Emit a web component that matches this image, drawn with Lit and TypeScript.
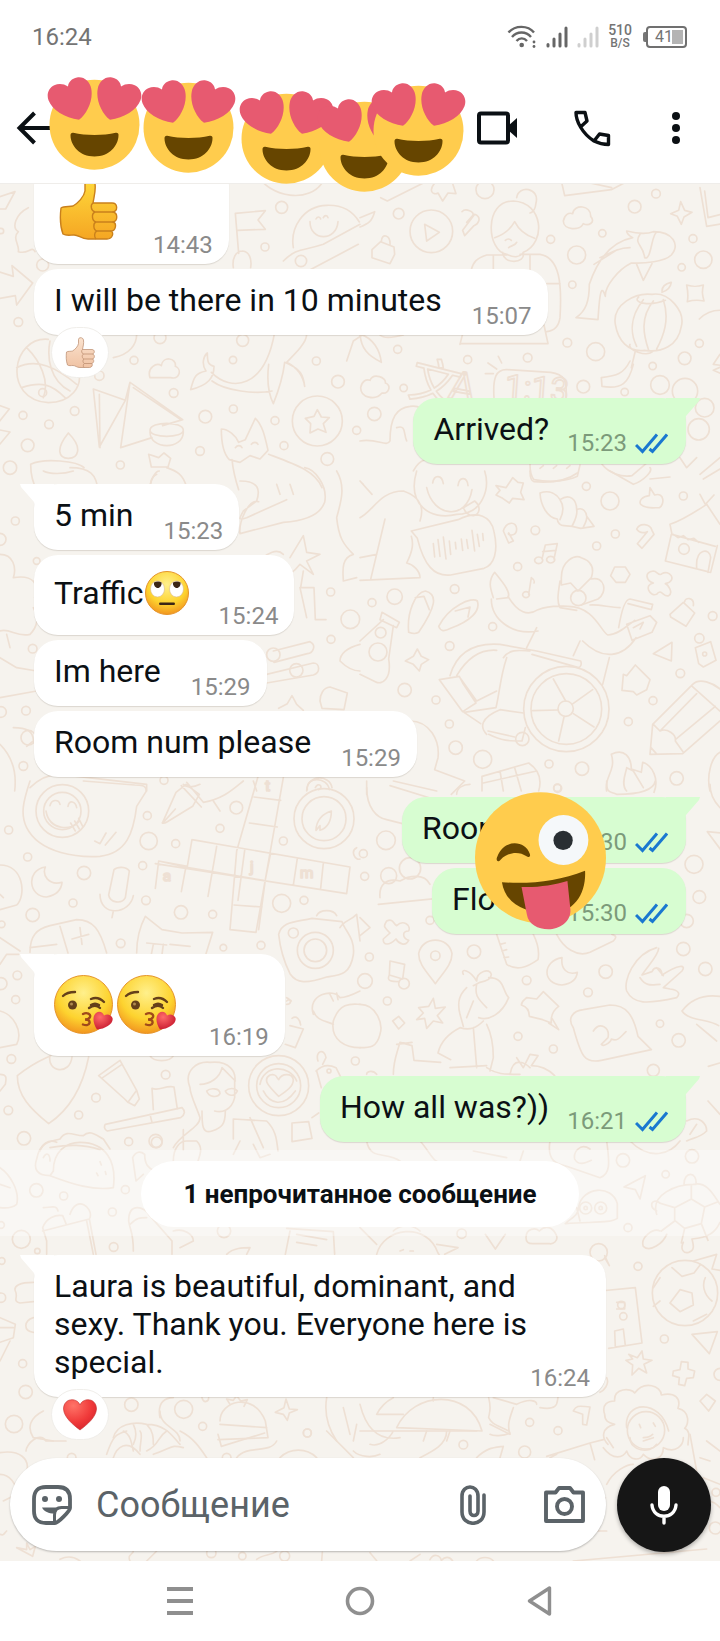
import { LitElement, html, svg, css, nothing, type TemplateResult } from "lit";
import { customElement, property } from "lit/decorators.js";
import { classMap } from "lit/directives/class-map.js";

/* ---------- Background doodles ---------- */

interface Doodles {
  x: number;
  y: number;
  dots: number[][];
  paths: string[];
  letters?: [number, number, number, number, string][];
}

// Every sheet is drawn at three times its size and placed at (x, y).
const sheets: Doodles[] = [
  {
    x: 0, y: 180,
    dots: [[845, 79, 18], [795, 198, 12], [128, 252, 18], [55, 423, 13], [3, 150, 8], [480, 470, 18], [728, 478, 18], [402, 538, 12], [298, 584, 14], [699, 537, 11], [949, 540, 12], [1014, 602, 19], [521, 636, 13], [224, 690, 13], [69, 703, 12], [147, 730, 13], [616, 707, 19], [700, 684, 12], [825, 719, 12], [1070, 748, 12], [852, 794, 12], [83, 793, 19], [600, 810, 13], [361, 852, 12], [982, 834, 19], [30, 860, 20], [952, 720, 75], [903, 240, 17], [128, 635, 12]],
    paths: [
      "M706 97l90-8-22 28 22 28-84 3M706 97l10 120M728 210c-22 0-32 24-28 50M728 210c20 2 28 24 24 50",
      "M880 200c-10-60 30-125 100-127 50-2 80 20 98 50M930 122c0 60 80 60 84 0M948 114c4-8 12-8 14 0M970 110c4-8 12-8 14 0M850 240c40-40 60-30 120-50l110-60M905 280l170-90",
      "M-10 50l55-18-28 52h-20M-10 270l50 16-4-32 62 52-48 66-4-28-56 10M85 80c-40 20-50 60-30 72-20 20 5 40 0 60 30 10 40-20 50 0",
      "M145 475c-110-10-140 180 0 190 70 0 100-50 92-88M50 560c60-30 120 0 180 50M80 500c40 40 70 100 50 150M150 480c-10 50 0 120 60 150M65 620c60-20 90-10 130 30",
      "M450 590c-10-30 20-46 34-36 4-30 46-24 42 2 20 8 14 40-14 34H450z",
      "M572 626c10-40 16-50 46-56-14-20-8-44 4-54 0 30 4 36 20 40 0 34-16 56-70 70zM634 574c60 60 160 50 190-120M636 600c40 30 130 40 180 30M806 550c-6 50 0 90 14 118 20-50 30-90 34-124 50 20 56 40 60 72-6-40-30-60-54-72 30-30 60-60 60-84",
      "M280 624l96 34-78 140zM298 640l2 160M376 658l14-54 158 112-60 18M390 604l-28 196 94-30M400 620l140 94M450 748c0-28 100-28 100 0 0 24-100 24-100 0zM450 752c0 56 100 56 100 0",
      "M952 686l12 22 24 2-18 18 8 26-24-10-24 12 2-28-16-16 26-6z",
      "M205 756c-40 50-28 76 0 76s46-30 0-76zM92 850c40-20 140-10 160 10M92 850c0 40 8 60 20 80M210 860c60 0 80 20 84 70M130 870c20 10 60 10 90 0",
      "M664 744c20 0 44 20 52 40l20-8 30-64c22 20 30 60 38 96l-24 26-30-10-30 20-32-8c-20-20-24-60-24-92zM696 836c4 40 10 60 20 90M806 820c80 30 140 50 160 100M706 800c6-8 16-8 20 0M754 790c6-8 16-8 20 0",
      "M446 820l30 10 16-14 20 16-8 26h-50zM470 880c-20 10-20 30-20 60M500 860c30 10 50 20 60 60",
      "M-10 670l38 14-32 40M-10 745l40 8-30 36M340 530c50-10 70-40 70-70M770 -20c40 70 160 90 200 20M1040 540l20-60 30-20",
    ],
  },
  {
    x: 360, y: 180,
    dots: [[375, 26, 27], [888, 38, 13], [824, 77, 19], [116, 98, 16], [214, 151, 64], [572, 175, 12], [727, 157, 11], [650, 222, 27], [999, 173, 12], [965, 259, 11], [637, 311, 11], [622, 485, 13], [707, 512, 27], [1018, 487, 12], [974, 532, 19], [113, 505, 12], [323, 536, 12], [503, 530, 13], [878, 555, 11], [670, 617, 19], [794, 633, 11], [131, 621, 11], [43, 699, 20], [900, 612, 28], [975, 630, 38], [1034, 680, 28], [1016, 745, 32], [1030, 236, 26]],
    paths: [
      "M194 130l44 24-38 26z",
      "M62 50l20 10 120-60M0 110l44-18c-8 30-20 36-44 46M230 0c-30 30-10 44 4 36l14 24 16-24 24 2-10-30",
      "M36 206l26-24 40 16 2 22-14 28-54-18zM64 182c0-28 28-20 26 10M308 148l36-48c24 10 10 30-2 34l-28 30zM306 92c10-12 40 0 32 12l-18 20",
      "M460 60c-90 0-80 150-20 160 20 10 40 10 50-6 70-30 60-150-30-154zM404 170c30-10 50-30 60-48 10 20 30 40 60 50M470 50c6-40 70-30 58 16-2 20-10 28-18 30M436 178c6-6 14-4 18 0M446 200c6-6 20-6 24-16M428 214c0 36 70 36 62 0M380 222c-30 10-40 20-46 44M380 222h60M400 222v44M480 220h60c60 10 66 90 60 190-4 30-20 40-40 42M510 222v44M300 490l10-40M300 488h264l-12-56M560 308h40",
      "M610 120c4-20 16-26 28-22 4-30 56-26 54 8 16 18-6 30-22 22-10 22-60 20-60-8zM962 62l12 26 22 6-24 14-8 22-12-24-20-8 24-10z",
      "M800 150c40 10 60 10 80 2 60 0 80 40 54 70-20 20-80 26-120 24-40 20-80 70-78 100-10-30-16-30-22 70l-66-6c30-20 40-50 40-100 30-90 80-130 130-140-14-8-18-14-18-20zM840 160c-20 30 10 30 14 70 20 10 20-70 36-76M830 250l20 48 26-50M720 230c40-20 60-30 90-30M702 250l70-44",
      "M766 430c-10-60 60-96 110-90 50-8 100 50 88 96-10 60-60 80-110 72-50 6-80-30-88-78zM810 490c-10 16 50 40 70 20M836 348c-20 16 30 30 80 10M850 356c-40 50-40 100-20 140M880 360c-40 50-30 100-14 148M910 356c20 60 0 110-20 148M906 330c0-20 20-24 28-26-2 14-10 24-28 30M826 510l-12 50M810 540c-20 40-40 44-86 50l2 26c60 10 80-10 94-66",
      "M980 312c20 6 30 6 50 0-4 20-4 26 2 48-20-4-30-4-50 2 4-20 2-30-2-50zM1020 20l20 116 50-8M1034 30l10 80 40-10M1018 414c20-20 40-28 70-26M1080 520l-20 30 30 4-30 14 24 10",
      "M2 620c4-20 16-26 28-22 10-24 50-8 46 8 20 6 10 34-10 30-20 24-64 14-64-16zM0 460c40 10 60 50 64 84-40-20-60-40-64-84M60 462c10 10 30 10 70 0",
      "M402 650c-4-60 6-86 40-84l130 8c40 6 50 20 46 76M415 526l10 20M384 546l26 18M376 578h24",
      "M0 780c50-10 80 20 90 0 0-70 20-100 60-104 30-4 40 10 40 30M110 740c30-10 20 20 30 40M160 870c20-40 50-40 70-30M510 850c0 30 6 40 12 46 50 10 100 4 130-10l8-34M540 862l10-8M580 862l10-8M620 862l10-8M726 850c20 26 60 40 90 34l70-60M604 0l10 44 140-18 50-26M1020 880l60-50",
      "M870 894l60-6M960 830l20 30 30-30M645 -4l110 24",
    ],
    letters: [[140, 640, 150, 14, "文"], [262, 650, 120, 10, "A"], [432, 650, 100, 4, "1:13"]],
  },
  {
    x: 0, y: 470,
    dots: [[46, 150, 12], [110, 270, 10], [98, 533, 13], [992, 363, 12], [1051, 445, 28], [993, 505, 12], [70, 885, 13], [78, 719, 13], [3, 723, 16], [0, 205, 18], [820, 551, 20], [889, 598, 20], [492, 928, 12], [85, 800, 22]],
    paths: [
      "M448 60c4-40 20-60 30-60M720 30c60 0 60 30 50 60l-40 30c-10 20-20 30 10 20l120-54M776 92c-30-10-60 60-56 96l130-34c60-4 110-20 124-60 10-50-30-100-60-104M830 40l10 30M870 40l10 30M1010 0c30 50 10 100 0 140 6 60 20 80 50 110-40 10-30 60-30 80l40-10",
      "M870 260l40-66 10 50 40 6-40 20 20 40-40-30c-30 40-50 30-50 60M850 250c-20-20-50 0-60 10M910 300l-8 50h40l4 96h32M900 350l20 90",
      "M820 540l110-28c20 10 10 34-8 36l-100 26M800 610l140-34c20 0 22 30 0 36l-140 24M836 712l26-14 14-24 14 26 20 18M960 690c0-20 10-40 30-42l52 18-10 50-66-4zM1080 520c-40 10-60 30-60 50 20 20 40 30 60 30",
      "M0 250c40 0 50 40 40 70 60-10 80 20 64 60M0 480c30-10 50 20 90 10 20-20 30-50 10-80M20 490l10 40M0 560l50 30 60 10M0 680l110-20M40 770c40 0 60 10 60 40l-20 16M90 950c20-20 50-40 90-40l260 30v20M0 820c40 40 50 90 44 140M550 940c10 10 30 10 50 0M760 930l10 30M800 930v30",
      "M920 960c0-50 70-50 76-10",
    ],
  },
  {
    x: 360, y: 470,
    dots: [[679, 46, 12], [750, 90, 27], [970, 75, 12], [526, 178, 13], [766, 189, 12], [710, 225, 12], [473, 287, 12], [284, 354, 13], [104, 377, 23], [36, 395, 12], [398, 467, 12], [269, 525, 13], [1058, 435, 13], [134, 657, 20], [228, 687, 12], [268, 759, 12], [961, 607, 13], [879, 689, 12], [805, 752, 12], [287, 830, 20], [368, 865, 27], [567, 879, 12], [666, 893, 20], [592, 950, 11], [950, 922, 20], [972, 234, 16], [655, 381, 23], [62, 485, 16], [54, 543, 27], [617, 713, 23], [619, 714, 128], [619, 714, 106], [487, 804, 20], [1018, 502, 14], [1034, 549, 6]],
    paths: [
      "M170 0c-30 100 40 150 120 130 80 0 100-80 84-130M200 50c20 90 120 100 136 6M218 36c4-26 28-26 32 2M294 44c4-30 28-26 30 0M310 110l34-20c20 16 16 40-4 44-20 0-26-14-30-24z",
      "M0 140c40-20 60-80 130-80 60 20 60 60 50 90M0 260l50-10M75 144L32 325M0 328l180-8c0-20-20-40-40-44 20-40 20-60 14-80M0 30l36 40",
      "M154 180l140-34c60-30 100-10 108 36 14 60 0 100-30 110l-100 20c-50 6-80-30-100-110z",
      "M220 218l4 40M234 206l6 50M250 198l8 66M268 210l4 40M286 214l2 20M304 204l4 34M320 206l4 26M336 178l8 62M352 190l6 36M368 188l2 20",
      "M408 44l30 6 20-30 16 14 16 2-8 28 10 22-34-4-10 14-20-14-20-10 12-14zM540 66c30-10 50 4 60 20 30-20 50 0 50 30 20-10 30 10 30 20l22 30-40 6c-20-6-30-8-50-8-10 0-20-8-20-20-30-4-50-40-52-78zM600 86c14 20 10 40 0 60M650 116c4 20-10 40-14 50M680 140c0 10-6 20-10 28",
      "M430 180c10-30 40-30 40-6s-30 20-24 12l14 24-14 6zM830 174c10-20 40-16 46 4l6 12-36 42-14-14 30-36c-14 6-24 4-32-8z",
      "M546 264l10-42 36-4-10 46M548 242l40-4M506 370l8-50c10 6 10 10 8 16",
      "M536 258a12 10 0 1 0 .1 0zM572 256a12 10 0 1 0 .1 0zM498 362a10 9 0 1 0 .1 0z",
      "M870 50l14 22c30-10 30 30 14 38-20 0-40 4-56-10-6-10 4-24 26-26zM930 160c30-10 80-40 110-60l40 60M930 160l6 30 130 36M934 190l-18 80 136 34 20-80M1010 290c-4-60 40-60 42-30l-8 44M1020 70l16 30 26-28M940 190l14 10 16-6 14 12 18-4 14 12",
      "M0 30l10 10M510 0c0 20 4 30 12 32 50 4 100-4 130-26M750 0l70 40c30-10 60-40 50-50M1030 24l50-30",
      "M600 330c-6 40-10 60 0 80l50 8M604 320c0-50 40-70 60-60 30 10 40 30 30 60l-40 40-22-24-28 6zM694 324c40-10 50 40 20 60l-50 18",
      "M400 380c-10-30-16-50 4-76 24 30 50 60 40 76l-34 4M394 384c0 60 60 110 140 96M444 376c30 50 60 60 90 40 40-16 70-10 90-10 80 0 100 80 120 86 30 0 60-30 80-44M530 470l-30 60M660 510l-20 44M668 510c60 60 120 50 160-10M748 560l-20 80",
      "M776 470c10-60 20-86 34-86l68 16-4 16-70-18M780 410c-30 0-60-10-90-8M800 460l70-26 20 20-14 30-60 24zM820 470l30-16-10 20",
      "M146 484c-6-60 20-120 50-124 40 10 30 50-20 124-10 6-20 4-30 0zM166 380l26-4 16 40M236 466c30-60 100-90 116-76 10 30-20 60-80 82-20 10-30 10-36-6zM286 420l44-12-6 30",
      "M66 424l52 30-8 16-50-24zM70 446L0 510M100 464l-14 100c10 60-20 80-40 68L0 610",
      "M172 534l12 22 22 10-22 14-6 20-18-20-24-10 24-14zM270 614c20-70 70-100 150-94l110 20 132 30c4 10 0 18-6 20l-140-40M290 614c30-50 70-80 120-76M238 626l60-10 10 20 40 60-40 26zM300 620l50 70 60-30M430 560c20-30 60-20 80-20M440 560c-20 60-20 100-32 150l-96 14 50 34M380 790c-20-20-20-50 40-74l70 10M384 780l80 18M496 770l-10 40c-40 0-60 0-100-20",
      "M617 690L580 624M636 700l62-44M640 728l62 40M612 738l-16 72M594 717l-76 2",
      "M880 300c-30 4-20 30 0 36-30 6-10 42 10 34 14-20 20 10 36 4 16-10-4-34-10-36 40-10 10-44-10-30-10 10-14-8-26-8zM764 288h32l14 22-14 24h-28l-16-20z",
      "M930 430l40-36 34 32-26 40-46-28zM974 392c0-14 30-14 26 12M1006 530l46-18 16 56-38 20-14-10zM880 548l56-34-2 56z",
      "M790 610l10 4 26-32 20 20 24 24-10 30-30 16-10-10-34-4zM870 850l8-90 120-120c20-20 60-6 90 20M870 850l98-2 112-98M880 760l20 20c20-10 50 10 46 30l24 34M900 780l110-112M946 806l120-100M994 644l90 80M873 830l16 18",
      "M740 960c-10-40 30-60 14-110 40-20 60 10 60 44l30 10 4-30c30 10 50 50 34 90M800 960c-20-20 0-60 0-70l20 10 30 50",
      "M150 750c60 0 90 60 84 110l-10 36 90 34-40 40M100 930l130 30M20 930v40M366 960v-44l140-40c30 20 40 50 30 84M420 900l10 60M464 890l20 70M370 936l160-36M1090 840c-40 10-50 80-40 120",
    ],
  },
  {
    x: 360, y: 780,
    dots: [[593, 22, 12], [78, 178, 28], [10, 218, 12], [14, 286, 12], [86, 284, 24], [150, 262, 32], [1002, 250, 27], [1018, 348, 19], [980, 420, 20], [226, 524, 14], [342, 512, 20], [28, 528, 12], [970, 504, 20], [1036, 564, 20], [737, 572, 20], [15, 600, 22], [500, 598, 13], [684, 634, 13], [82, 660, 12], [474, 766, 12], [900, 728, 11], [956, 778, 20], [580, 804, 12], [880, 868, 18], [132, 608, 16], [210, 418, 12]],
    paths: [
      "M20 20c0 60 30 90 60 96l80 20M90 14l130 40M290 40c0-20 20-30 40-30M740 0c0 40 10 30 30 40 60 0 110-10 116-40M1050 10c0 30 10 50 30 70M1042 152l40 4M1042 152l40 54M55 370l200-20M60 350c-4-40 20-60 60-50l20-10c40-10 60 0 70 20",
      "M0 410l30 30-30 24M80 420c20-10 20 10 30 14 20-20 44 0 36 16-20 0-20 20 0 28-10 20-30 10-38-4-20 20-40 20-38 0l20-18c-20-20-20-20-10-36z",
      "M226 608c-30-40-50-60-50-90 10-54 90-54 100 0 0 30-20 50-50 90zM90 540l44 10-6 44-40-12zM88 582c-10 20 10 20 30 20",
      "M410 460l30 90c30 20 60 10 94-14 6-30-6-60-14-76M420 490l16-4M426 510l14-4M432 530l14-2M590 460c20 40 60 70 100 54l70-34c10-10 10-16-4-20M606 530c-60 10-60 80 0 82 30-4 44-20 46-38-30 10-50-10-46-44z",
      "M890 500c-70 20-100 100-90 130 20 40 60 40 150 20 10-10 10-22-20-26l-20-4 56-50c14-20-10-20-60 12 0-20-20-30-30-10l-30 10c20-30 50-60 50-80M840 590c20 30 40 20 60 20M890 560l20 24",
      "M310 580c-10-20 20-14 40 20 0-30 40-40 44-20 0 10-10 20-34 24l-20 10M386 590c50 0 40 40 60 60-20 50-60 70-90 60M320 620c-20 20-30 40-20 80l10 36M350 610c-6 30 0 40 30 70M340 660l-20 50M300 740c-40 20-60 50-66 76l38 20M380 730c20 40 20 80 20 100l-10 40M300 740c30 10 50 0 70-20M100 880c0-40 10-60 20-96l36 10 6 44 80 6M110 790l46-6M270 860l110-6M340 740l10 120",
      "M176 680l30-4 14-24 6 30 30-4-24 26 16 22-28-6-20 22-6-30-24 4 20-20zM98 720l18-14 18 20-18 18zM500 650l30 4 20-22 46 44c-20 14-24 30-22 50l-26-10-40-10c0-20-10-30-24-34 0-12 10-16 16-22zM566 726l30 20-20-34",
      "M640 740c-20-30 0-50 30-54l80-14c50 0 70 30 84 94l40 40-150 32c-50 10-60-10-84-98zM700 750c20-30 50-10 44 20l-20 20c10 10 30-10 30-16 20 10 30-10 44-22",
      "M966 690c30-40 70-50 114-44M966 690c20 30 80 24 110 44M1010 730l60 50M450 880c10-60 50-30 60-20M470 830l20 30 20-40 24 4-20 30c40 0 60 20 70 30M0 670c50 0 70 60 60 90-10 40-30 40-60 40M20 880c0-10 20-14 30 0M1045 856l34-10M980 1020c40-20 60 10 60 30-20 20-40 20-60 30M1044 960l36 40M990 1060l20-30M380 860c30 20 50 20 100 20",
    ],
  },
  {
    x: 0, y: 780,
    dots: [[26, 147, 12], [187, 90, 79], [187, 90, 56], [442, 104, 12], [446, 180, 26], [83, 228, 12], [527, 188, 12], [709, 80, 19], [660, 142, 12], [850, 180, 12], [428, 254, 12], [252, 276, 20], [438, 358, 13], [219, 366, 12], [98, 402, 20], [543, 394, 20], [638, 400, 12], [362, 487, 13], [845, 367, 27], [912, 358, 12], [783, 493, 12], [670, 500, 10], [880, 456, 15], [946, 508, 54], [946, 508, 34], [972, 113, 90], [972, 113, 66], [52, 583, 13], [3, 608, 18], [47, 656, 12], [34, 834, 13], [497, 881, 13], [288, 950, 13], [236, 1002, 12], [25, 988, 13], [72, 1072, 20], [386, 1082, 12], [467, 1080, 20], [836, 914, 90], [836, 914, 66], [1066, 840, 12], [987, 870, 6], [5, 430, 10]],
    paths: [
      "M90 0c-20 60-30 100-10 140 40 80 160 90 220 86 80-10 100-70 110-150l28-44c4-20-20-20-34-20L250 0M150 74c4-20 26-20 30-4M204 76c4-20 22-16 26 4M138 90c10 60 80 60 100 30M212 126l14 24M224 120l14 24M236 112l12 24M284 180l16 8 18-32M316 192l32-38",
      "M488 124l40-90 30-24 40 30-20 36-76 46c-10 6-18 6-14 2zM490 124l36-40M544 14l60 64M560 4l50 60c60-10 90-40 120-64M640 60l20 30",
      "M776-20L710 210l-20 236 78 8L850-10M762 48l80 10M748 126l84 12M576 176l474 82-10 80-574-90M576 176l-14 80-86-16-10 82M650 196l-26 150M558 256l-14 76M734 208l-20 150M812 216l-16 80-20 150M892 232l-12 80M970 246l-8 76M476 240l80 18 234 40M702 372l84 6",
      "M960 134l-12 14c0-30 20-50 46-58 0 30-10 50-34 58zM922 26c-6-40 60-40 66 0M946 20c10-20 26 0 10 6M1070 200c-20 10-4 40 10 34",
      "M136 258c-60 10-50 90 4 90 30-6 44-20 46-44-40 10-60-20-50-46zM342 266c10-10 38-10 46 4l-12 80c-10 20-46 16-50-8zM300 340c0 70 90 60 100 4M340 390l-4 20M0 252c70 0 80 90 50 120L0 386M0 340l10 10",
      "M90 514c0-50 20-70 60-80l80-18c50 0 70 30 90 100M180 436l24 80M90 500l80-10M240 440l6 50M216 474l50-14M410 516c0-50 10-80 26-110l50 40 60 10 92-2-20 64M440 486l60 6M460 490l-6 30M490 490l-4 30M510 490l60 6",
      "M836 460c10-40 50-36 100-48l90 10c10 30 40 50 34 100-10 60-40 60-80 66-60 20-90 20-110-10-20-40-30-80-34-118zM950 404c10-20 50-20 60 0M1020 440c10-20 30-20 50-40l10 80",
      "M0 470l60 40M0 550l20-30h36M0 690c40 10 70 60 50 100L0 800M0 880c20 0 20 10 16 30l-16 20",
      "M940 700c-20-60 60-80 80-50 20 0 40-10 60-20M1000 720c20-60 60-50 80-50M1000 720c-10 60 40 80 80 80M940 690c10 30 40 30 60 40M990 640l10 20M1010 636l4 20M860 650c20 10 10 20 0 20M856 790l30 10 24-56-40-10M876 712c14-10 24 4 26 20",
      "M52 884c50-40 80-50 100-60M52 884c0 60 40 100 94 144 60-40 100-100 120-200M150 824c-10 50 60 60 66 4M296 884l64-46 50 90-26 36-10-10zM308 890l58-40M384 964l20 10 14-20-8-26M460 986l-4-64c20 10 40-10 66-4l10 66M316 1030l230-50c10 10 10 20-4 30l-220 40c-10-4-10-14-6-20zM450 1000l6 24",
      "M570 920c-20-50 20-80 60-76 60-6 80 30 74 60M570 920c0 20 20 60 30 90 0 30-60 50-80 90M600 910c30 0 60-20 66-50l40 40M704 900v50c-10 40-40 46-60 40M620 930c10-10 40-10 40 8-8 14-34 10-40-8zM676 930c10-10 30-10 36 0-8 20-30 14-36 0zM606 990c0 40 0 70 30 60 30-10 40-20 40-60M700 1014l100 6c30 30 30 60 34 90M700 1014v60M550 1046v60M750 1010l40 90",
      "M836 946c-30-30-50-50-26-64 20-6 20 10 26 14 10-20 40-20 44 0 0 20-20 34-44 50zM780 910c10-60 90-60 110-10M790 930c20 40 60 50 96 0",
      "M948 870c20-20 40-20 60-10l20 40M950 870l14 50M954 840c-10-30 20-40 24-10l-10 20M876 1026l50-4 10 50-60 10zM936 1010l20-14M120 1110c10-30 40-30 60-36 20-30 40-10 70-10 20-20 40 0 60 10l20 30M150 1100c60-10 100-10 150 6",
      "M450 824c10 20 60 20 70 0M860 660c6-6 12-4 14 0",
    ],
    letters: [[488, 300, 46, 0, "a"], [750, 272, 46, 0, "j"], [900, 290, 46, 0, "m"], [796, 30, 46, 0, "t"]],
  },
  {
    x: 0, y: 1140,
    dots: [[109, 148, 20], [191, 165, 12], [376, 146, 12], [337, 213, 12], [64, 295, 27], [341, 318, 13], [5, 360, 10], [3, 252, 10], [68, 668, 12], [77, 753, 20], [42, 849, 26], [394, 791, 20], [551, 805, 27], [608, 856, 12], [922, 876, 12], [3, 470, 14], [672, 270, 20], [112, 330, 8], [470, 4, 16]],
    paths: [
      "M160 90c0-60 40-86 80-86 80 0 110 60 100 136-60 10-120-10-190-36zM150 104c-40 0-50-20-40-50 10-50 40-60 60-50M130 50c10-20 20-10 20 10M300 62l4 10M290 96l4 8M316 92l2 8M398 50c10-20 24-20 36-10 0 30 10 40 30 50M398 50l10 70 22-20M520 60c0-40 20-60 40-60h30c20 20 10 40 4 60M700 40l20-40M760 10l20 40 30-10",
      "M0 80c30 20 60 70 50 110-20 16-40 10-50 10M0 130l30 10M140 300l-12-40c10-30 40-40 60-36l10 24M128 270l140-36 20 106M260 240l20 100M130 200c20 0 40-10 44 10M210 220c20-60 70-20 60 10M140 300v40M386 240c0-60 50-40 60-20l70 80 0 40M400 330c0-60-10-60-14-90M390 250c20-20 30-20 50-20M520 270c30-10 60 10 60 30l-40 20M680 340c20-20 50-20 70-20l-10 20",
      "M100 424c-40 0-60 10-54 26 10 20-10 30 14 36l40-4M100 530c-30 10-30 40 0 44M0 530l46 20-6 40-40 14M30 600l-30 60M0 560h40",
      "M480 830c-10-50 20-60 40-60M480 810c0 50 60 50 60 90M606 770c6 20 20 10 20 0M660 840c0-60 100-90 136 0l8 50-150 6M660 850l140 10M690 790l-10-16 20 4 10-14 12 16 20-4-10 20M858 774l10 30 24 2-24 10-6 22-12-18-24-6 26-14zM980 770c-10 60 10 100 30 130M1030 800l20 80M1070 850l-10 50M340 890c10-40 60-50 100-40 60 0 80 40 100 60M400 850c10 20 10 40 0 60M440 850c20 20 20 40 20 60M130 810c-40 20-50 50-30 80l60 10",
      "M870 270l-14 70M860 262l140 10 4 68M890 280l90 16M890 304l60 10",
    ],
  },
  {
    x: 360, y: 1140,
    dots: [[789, 58, 20], [996, 46, 20], [917, 100, 11], [677, 201, 18], [722, 201, 18], [677, 201, 5], [722, 201, 5], [804, 260, 12], [305, 278, 14], [834, 376, 12], [716, 334, 26], [975, 456, 98], [913, 594, 12], [509, 844, 12], [594, 869, 12], [1080, 700, 18], [784, 492, 11], [790, 526, 11], [858, 868, 56]],
    paths: [
      "M570 0c-10 60 20 70 50 76l100 34c30-10 30-40 20-110M690 24c-30-20-50 10-46 30 10 20 30 14 50 4M20 0c10 60 60 30 100 60M180 0c20 20 40 60 50 60M340 30l100 20M480 60l10-30M810 0c60 60 120 40 150 0M792 138l64-34-16 70-14-28z",
      "M616 248c10-14 40-20 40-50 10-60 100-70 116-10v44c-20 14-60 10-156 16M650 200l10 40M498 290c0-30 30-30 40-20 20-20 40-10 50 10 10 20-10 30-20 28h-50c-14 0-20-8-20-18zM376 280l30 44 30-44",
      "M0 260l50 50M50 340c20-80 150-100 184-4l4 6M100 270c20-20 60-20 80 0M120 330l10-4M150 330h10M230 310l64 10-40 20",
      "M944 200l50-26 40 24-10 50-50 14-30-24zM890 220c-20-60 60-90 110-90 40-10 60 30 80 60M944 200l-46-14M994 174v-42M1034 198l40-16M1024 248l20 50M974 262l-10 44M944 240l-40 30M890 210c-20-10-20-30 0-30l10 6M972 130c0-40 40-40 36 0M900 270c-20-10-60 20-50 46 20 20 60-10 70-36M970 304c-10 20 0 34 16 30 20-6 14-24 10-40 50-4 70-20 84-50",
      "M734 350l14 24-14-30M960 446l36 10 4 36-40 20-30-26zM936 380l30 26 36-10 20-26M880 440l20-30M900 480l-20 16M1036 410c-10 20-6 50 20 70M1000 540l40-20M1000 360l70-20-14 44 24 4M720 450l106-10 20 166-100 16M764 570l26-6 6 50-30 4zM770 484h24v20h-24M996 580l76-8-24 66z",
      "M806 640l26 10 14-20 4 24 26 4-24 12 8 26-24-14-20 20 2-30-20-14 20-4zM940 690l20-4 4-24 20 2v20l20 6-4 20-20 2-6 22-18-4 2-20-20-6zM1020 780l20-20 26 20-20 30z",
      "M734 820c-10-30 10-40 30-40-4-40 50-40 60-24 30-40 80-20 80 6 40-10 60 10 50 40 40 10 30 50 20 60 20 10 10 30 10 50M734 820c0 20 10 24 30 30-40 10-40 40-20 60M800 860c-10-80 100-90 126 10M838 850l4 10M880 846l6 10M850 890c10 0 20 0 28-10",
      "M50 820c10-20 30-40 50-50M50 820h80M110 860c50-110 220-120 256 10zM200 870l-10 30M270 870l-10 30M220 770v10M0 790c20 80 60 110 120 100M386 770c10 40 0 50 0 60 10 20 20 20 60 40M400 770l70 20c40-20 60-10 60 0M540 800c60 10 50-20 54-30M460 800c-10 30-20 50-10 80l-60-30M640 810c10-20 20-14 50-12l-10 54-12-2v-30zM740 710c10 20-10 40-20 44",
    ],
  },
  {
    x: 0, y: 1430,
    dots: [[215, 80, 13], [680, 80, 13], [922, 6, 12], [727, 375, 11], [854, 375, 15], [634, 366, 14]],
    paths: [
      "M0 65c60-10 90 20 80 56M0 130c30 0 50 30 50 60l-40 20M20 300c-10 10-10 14-20 10M78 60c0-20 40-60 60-30l60 0M320 70c20-60 30-60 60-70M340 80c10-30 40-60 80-10M400 60c-6-30-10-50-30-60M420 60c0-30 10-50 0-60M440 60c40-20 30-40 60-60M460 70c60-20 50-30 90-20M540 0c40 20 60 50 80 80M654 10l10 36 130-40M710 80c30-40 100-10 120-50M840 80c30-30 80-30 110 0M980 0l80 80M50 350l30 6 0-20 10 20 16-10-8 30zM180 385c20-10 40-10 60 5M390 390c-10-20 10-20 10-30M440 390l30-30M770 385c20-16 40-10 60-24M965 390l2-26",
    ],
  },
  {
    x: 360, y: 1430,
    dots: [[310, 41, 13], [494, 63, 18], [1068, 184, 12], [1066, 291, 18]],
    paths: [
      "M0 0h350M-20 60c20 20 60 20 80 10M30 40c30 10 60-20 70-40M180 80c40-20 80-40 80-80M390 10c10 6 40 6 60-4M350 80c30-30 50-30 80-34l-10 34M560 76l130-40 14 50M570 80l20-10M690 36l40-10M730 50c30 40 60 30 70 10 10 30 40 30 50 10 30 30 60 10 60-20 40 20 60-10 60-30M740 20l20 30M810 20c0 40 60 50 80 20M850 30l30-10M740 160c20-40 60-60 80-60M990 10l20 110M1020 80l30 10M1040 30l40 30M1030 140l50 20M690 300h50M710 260l26-60M30 365l20 24M150 390l30-20M210 386c10-20 30-14 34 2 10-10 24-14 34 2M350 390c10-14 40-14 50 0M640 390l400-36M1040 210c20 0 30 10 40 20",
    ],
  },
];

const wallpaper = svg`${sheets.map(
  (s) => svg`<g transform="translate(${s.x} ${s.y}) scale(0.33333)">
    ${s.dots.map(([cx, cy, r]) => svg`<circle cx=${cx} cy=${cy} r=${r}></circle>`)}
    <path d=${s.paths.join("")}></path>
    ${(s.letters ?? []).map(
      ([x, y, size, turn, ch]) => svg`<text x=${x} y=${y} font-size=${size} transform="rotate(${turn} ${x} ${y})">${ch}</text>`,
    )}
  </g>`,
)}`;

/* ---------- Emoji ---------- */

const heartEyes = html`<svg viewBox="-1 -1 38 37" width="95" height="93" aria-hidden="true">
  <circle cx="18" cy="18" r="18" fill="#ffcc4d" />
  <path fill="#e75a70" d="M16.700 3.600C16.200.7 13.800-1.400 11-.9 8.900-.5 7.600.9 7.400 2.700 5.700 1.600 3.700 1.400 1.900 2.200-.3 3.200-1.300 5.800-.4 8.200c1.500 3.900 6.500 7 12.200 7.800 3.200-2.300 5.800-8 4.900-12.400z" />
  <path fill="#e75a70" d="M19.300 3.600C19.800.7 22.200-1.400 25-.9c2.100.4 3.400 1.800 3.600 3.600 1.700-1.100 3.700-1.300 5.500-.5 2.200 1 3.200 3.600 2.300 6-1.500 3.900-6.500 7-12.200 7.800-3.200-2.300-5.800-8-4.900-12.400z" />
  <path fill="#664500" d="M9.500 21.200c2.500.6 5.500.9 8.500.9s6-.3 8.500-.9c.8-.1 1.200.3 1.100 1.100-.1 4-3.600 8.400-9.600 8.400s-9.500-4.400-9.600-8.400c0-.8.4-1.200 1.100-1.100z" />
</svg>`;

const zany = html`<svg viewBox="345 32 394 414" width="131" height="138" aria-hidden="true">
  <circle cx="542" cy="229" r="197" fill="#ffcc4d" />
  <circle cx="611" cy="176" r="75" fill="#f5f8fa" />
  <circle cx="610" cy="177" r="29" fill="#292f33" />
  <path fill="#664500" d="M415 240c-6-2-6-8-3-14 20-54 84-50 98-8 3 8-4 12-10 7-22-16-54-14-78 10-3 3-5 5-7 5zM426 303c90 6 170-4 250-35 4 66-30 128-106 128-74 0-134-28-144-93z" />
  <path fill="#e75a70" d="M485 317c48 2 98-6 138-18l9 86c2 34-28 57-60 59-34 2-66-12-71-44z" />
</svg>`;

const yellow = (id: string) => svg`<radialGradient id=${id} cx=".5" cy=".3" r=".75">
  <stop offset="0" stop-color="#fff08c" /><stop offset=".6" stop-color="#fdd32f" /><stop offset="1" stop-color="#f08a1c" />
</radialGradient>`;

const rollingEyes = html`<svg class="emoji mid" viewBox="0 0 44 44" aria-label="🙄" role="img">
  <defs>${yellow("re")}</defs>
  <circle cx="22" cy="22" r="21.500" fill="url(#re)" stroke="#e5942a" />
  <g fill="#fff" stroke="#d9b98a" stroke-width=".6"><ellipse cx="12.500" cy="18" rx="7" ry="8" /><ellipse cx="31.500" cy="18" rx="7" ry="8" /></g>
  <g fill="#3b2616"><path d="M9 11.500c3-1.500 5-1.500 7.500 0 .5 3-1.500 5.500-3.700 5.500S8.500 14.500 9 11.500zM28 11.500c3-1.500 5-1.500 7.500 0 .5 3-1.500 5.500-3.700 5.500s-4.300-2.500-3.800-5.500z" /><rect x="14" y="31.500" width="16" height="2.400" rx="1.200" /></g>
</svg>`;

const kiss = html`<svg class="emoji big" viewBox="0 0 59 59" aria-label="😘" role="img">
  <defs>${yellow("ki")}<radialGradient id="kh" cx=".35" cy=".3" r=".8"><stop offset="0" stop-color="#ff6a6a" /><stop offset="1" stop-color="#c4142a" /></radialGradient></defs>
  <circle cx="29.500" cy="29.500" r="29" fill="url(#ki)" stroke="#e5942a" />
  <g fill="none" stroke="#65401a" stroke-width="2.400" stroke-linecap="round"><path d="M9 21c3-3 7-4 12-4M37 24c5-2 9-1 13 3M35 33c4-3 8-3 11 0M37 30c3-2 5-2 8 0" /><path stroke="#a04a1a" d="M29 39c4-2 8 0 7 3-1 2-3 2.500-5 2.500 3 0 5 1 4.500 3.500s-4 2.500-6.500 1.500" /></g>
  <circle cx="18.500" cy="30" r="4.500" fill="#65401a" /><circle cx="17.500" cy="29" r="1.500" fill="#b08a50" />
  <path fill="url(#kh)" d="M43 54.500c-4-6-5-13-1-16.500 3-2.500 7-1 8 2.500 3-2 7-1 8.500 2.500 1.500 5.500-7 11-15.500 11.500z" />
</svg>`;

const thumb = (kind: string, top: string, bottom: string, line: string, id: string) => html`<svg class="emoji ${kind}" viewBox="0 0 60 64" aria-label="👍" role="img">
  <defs><linearGradient id=${id} x1="0" y1="0" x2="0" y2="1"><stop offset="0" stop-color=${top} /><stop offset="1" stop-color=${bottom} /></linearGradient></defs>
  <path fill="url(#${id})" stroke=${line} stroke-width="1.400" stroke-linejoin="round" d="M3 30c3-2 9-1 12-2 5-3 11-9 12-15V5c0-5 9-5 10 1 1 7-1 13-2 19h19c6 0 6 8 1 9 5 1 5 9 0 10 4 1 3 9-2 9 3 1 2 8-4 8H30c-7 0-9-4-14-4-4 0-8 1-11-1-3-8-3-18-2-26z" />
  <path fill="none" stroke=${line} stroke-width="1.400" d="M35 25c-3 2-2 8 2 9h18M37 34c-4 2-3 9 1 10h17M38 44c-3 1-3 8 1 9h14M39 53c-3 1-3 6-1 8" />
</svg>`;

const heart = html`<svg class="emoji heart" viewBox="0 0 34 32" aria-label="❤️" role="img">
  <defs><radialGradient id="rh" cx=".3" cy=".2" r=".9"><stop offset="0" stop-color="#ff7468" /><stop offset=".6" stop-color="#f03a3a" /><stop offset="1" stop-color="#d3222c" /></radialGradient></defs>
  <path fill="url(#rh)" stroke="#c2302f" stroke-width=".6" d="M17 31C9 25 1 18 .5 10 .5 4 4.500.7 9 .7c4 0 7 2.300 8 5.300 1-3 4-5.300 8-5.300 4.500 0 8.500 3.300 8.500 9.300C33 18 25 25 17 31z" />
</svg>`;

const ticks = html`<svg class="ticks" viewBox="0 0 33 21" aria-label="Read" role="img">
  <path fill="none" stroke="#1a78d0" stroke-width="3" d="M1 12l6.500 6.500L22 1.500M14.500 16l3 2.500L32 1.500" />
</svg>`;

/* ---------- Message bubble ---------- */

@customElement("chat-bubble")
export class ChatBubble extends LitElement {
  @property({ type: Boolean, reflect: true }) out = false;
  @property({ type: Boolean }) tail = false;
  @property({ type: Boolean }) long = false;
  @property() time = "";
  @property({ attribute: false }) reaction?: TemplateResult;

  static styles = css`
    :host { display: flex; }
    :host([out]) { justify-content: flex-end; }
    .bubble {
      position: relative; display: flex; align-items: flex-end; gap: 30px;
      box-sizing: border-box; max-width: 572px; padding: 0 16px 0 20px;
      border-radius: 24px; background: #fff; box-shadow: 0 1px 1px rgba(60, 40, 20, 0.14);
      min-width: var(--bubble-min, 0);
    }
    .out { gap: 18px; padding: 0 18px 0 20px; background: #d7fdd1; }
    .long { gap: 0; }
    .tail::before {
      content: ""; position: absolute; top: 0; left: -14px; width: 34px; height: 24px;
      background: inherit; clip-path: polygon(0 0, 100% 0, 100% 100%, 16px 100%, 14px 18px, 1px 3px);
    }
    .out.tail::before { left: auto; right: -14px; transform: scaleX(-1); }
    .text { position: relative; padding: 12px 0 16px; font-size: 32px; line-height: 38px; color: #0b1014; }
    .meta {
      display: flex; align-items: center; gap: 8px; margin: 0 0 7px auto;
      font-size: 24px; line-height: 24px; color: #8a8a8a;
    }
    .out .meta { margin-bottom: 9px; color: #7c9a7a; }
    .ticks { width: 33px; height: 21px; }
    .reaction {
      position: absolute; left: 17px; bottom: -43px; width: 58px; height: 51px; box-sizing: border-box;
      display: flex; align-items: center; justify-content: center;
      border: 1px solid #f0eeea; border-radius: 26px; background: #fff;
    }
    .heart { width: 34px; height: 32px; }
    .small { width: 30px; height: 32px; }
  `;

  render() {
    return html`<div class=${classMap({ bubble: true, out: this.out, tail: this.tail, long: this.long })}>
      <div class="text"><slot></slot></div>
      <div class="meta"><time>${this.time}</time>${this.out ? ticks : nothing}</div>
      ${this.reaction ? html`<div class="reaction">${this.reaction}</div>` : nothing}
    </div>`;
  }
}

/* ---------- Screen ---------- */

const bars = (color: string) => html`<svg width="22" height="22" viewBox="0 0 22 22" aria-hidden="true">
  <path stroke=${color} stroke-width="3" stroke-linecap="round" d="M2 18.500v1.500M8 13v7M14 8v12M20 2v18" />
</svg>`;

@customElement("app-root")
export class AppRoot extends LitElement {
  static styles = css`
    :host { display: block; font-family: Roboto, "Noto Sans", "Liberation Sans", sans-serif; color: #0b1014; }
    * { box-sizing: border-box; }
    button { display: grid; place-items: center; padding: 0; border: 0; background: none; color: inherit; font: inherit; }
    svg { display: block; }
    .screen { display: flex; flex-direction: column; height: 100vh; overflow: hidden; background: #fff; }
    .status { display: flex; align-items: center; height: 73px; padding: 0 33px 0 32px; color: #747474; font-size: 24px; }
    .status-icons { display: flex; align-items: center; margin-left: auto; gap: 9px; }
    .rate { display: flex; flex-direction: column; align-items: center; font-size: 14px; line-height: 13px; font-weight: 500; }
    .rate small { font-size: 12px; }
    .battery { display: flex; align-items: center; margin-left: 2px; }
    .battery::before { content: ""; width: 3px; height: 10px; background: #777; border-radius: 2px 0 0 2px; }
    .level {
      display: flex; align-items: center; justify-content: flex-end; width: 41px; height: 22px; padding-right: 12px;
      border: 2px solid #707070; border-radius: 4px; font-size: 16px; line-height: 16px;
      background: linear-gradient(#b4b4b4, #b4b4b4) right 2px center / 11px 14px no-repeat;
    }
    .bar { position: relative; z-index: 2; display: flex; align-items: center; height: 111px; padding: 0 28px 0 12px; border-bottom: 1px solid #efedea; }
    .actions { display: flex; align-items: center; gap: 56px; margin-left: auto; }
    .actions button:last-child { margin-left: -7px; }
    .sticker { position: absolute; }
    .s1 { left: 47px; top: 4px; }
    .s2 { left: 141px; top: 7px; }
    .s3 { left: 239px; top: 18px; }
    .s4 { left: 317px; top: 26px; }
    .s5 { left: 371px; top: 10px; }
    .chat { position: relative; flex: 1; min-height: 0; display: flex; flex-direction: column; background: #f6f3ee; }
    .wallpaper {
      position: absolute; inset: 0; width: 100%; height: 100%;
      fill: none; stroke: #eee0d4; stroke-width: 5; stroke-linejoin: round; stroke-linecap: round;
      font-family: Roboto, "Noto Sans CJK SC", sans-serif;
    }
    .messages {
      position: relative; flex: 1; min-height: 0; overflow: hidden; display: flex; flex-direction: column;
      justify-content: flex-end; gap: 20px; margin: 0; padding: 0 0 61px; list-style: none;
    }
    .messages li { padding: 0 34px; }
    .group { display: flex; flex-direction: column; gap: 5px; }
    .reacted { padding-bottom: 43px !important; }
    .emoji { display: inline-block; }
    .mid { width: 44px; height: 44px; margin: 4px 0 4px 1px; vertical-align: -15px; }
    .big { width: 59px; height: 59px; margin: 9px 4px 6px 0; vertical-align: top; }
    .big:last-child { margin-right: 3px; }
    .lone { width: 60px; height: 64px; margin: 4px 5px 6px 4px; vertical-align: top; }
    .room { --bubble-min: 284px; }
    .floor { --bubble-min: 254px; }
    .pair { position: relative; width: fit-content; margin-left: auto; align-items: flex-end; }
    .zany { position: absolute; z-index: 1; right: 114px; top: -5px; }
    .unread { display: flex; justify-content: center; margin: -12px 0 -1px; padding: 11px 0 9px !important; background: rgba(255, 255, 255, 0.35); }
    .pill { padding: 0 42px; border-radius: 33px; background: #fff; font-size: 26px; line-height: 66px; font-weight: 700; }
    .composer { position: relative; display: flex; align-items: flex-start; gap: 11px; padding: 0 9px 9px 10px; }
    .field {
      flex: 1; min-width: 0; display: flex; align-items: center; height: 93px; padding: 0 21px 0 22px;
      border-radius: 47px; background: #fff; color: #5b6368; box-shadow: 0 1px 2px rgba(0, 0, 0, 0.25);
    }
    .field input {
      flex: 1; min-width: 0; margin: 0 25px 0 24px; padding: 0; border: 0; outline: 0; background: none;
      font: inherit; font-size: 36px; color: #0b1014;
    }
    .field input::placeholder { color: #5b6368; opacity: 1; }
    .field button + button { margin-left: 58px; }
    .mic { width: 94px; height: 94px; border-radius: 50%; background: #161616; color: #fff; box-shadow: 0 2px 4px rgba(0, 0, 0, 0.3); }
    .nav { display: grid; grid-template-columns: repeat(3, 1fr); height: 80px; padding: 0 90px; color: #8f8f8f; }
  `;

  render() {
    return html`<div class="screen">
      <div class="status">
        <time>16:24</time>
        <div class="status-icons">
          <svg width="30" height="24" viewBox="0 0 30 24" aria-hidden="true">
            <g fill="none" stroke="#666" stroke-width="2.400"><path d="M1.500 7.500C8 0 21 0 27 7.500M5 12c5-6 14-6 19 0M9.500 16c3-3.500 7.500-3.500 10.500 0" /></g>
            <circle cx="14.700" cy="20" r="2.300" fill="#666" /><circle cx="27" cy="17" r="1.400" fill="#666" /><circle cx="27" cy="21.500" r="1.400" fill="#666" />
          </svg>
          ${bars("#666")} ${bars("#cfcfcf")}
          <div class="rate"><span>510</span><small>B/S</small></div>
          <div class="battery"><span class="level">41</span></div>
        </div>
      </div>

      <header class="bar">
        <button aria-label="Back">
          <svg width="40" height="40" viewBox="0 0 40 40" fill="none" stroke="#0b1014" stroke-width="4"><path d="M38 20H8M22.500 5L7.500 20l15 15" /></svg>
        </button>
        <div class="actions">
          <button aria-label="Video call">
            <svg width="42" height="34" viewBox="0 0 42 34"><rect x="3" y="2.500" width="29" height="29" rx="2" fill="none" stroke="#0b1014" stroke-width="4" /><path fill="#0b1014" d="M32 15l9-8v20l-9-8z" /></svg>
          </button>
          <button aria-label="Call">
            <svg width="37" height="37" viewBox="0 0 37 37" fill="none" stroke="#0b1014" stroke-width="3.400" stroke-linejoin="round"><path d="M2 2.500h9l2 8.500-6.500 6C3.500 12 2 7 2 2.500zM6.500 17c3.500 6 8 10.500 13.500 14M20 31l5.500-7 9 1.500v9c-4.500 0-9.500-1-14.500-3.500z" /></svg>
          </button>
          <button aria-label="More options">
            <svg width="32" height="34" viewBox="0 0 32 34" fill="#0b1014"><circle cx="16" cy="5" r="4" /><circle cx="16" cy="17" r="4" /><circle cx="16" cy="29" r="4" /></svg>
          </button>
        </div>
        ${["s1", "s2", "s3", "s4", "s5"].map((s) => html`<span class="sticker ${s}">${heartEyes}</span>`)}
      </header>

      <main class="chat">
        <svg class="wallpaper" viewBox="0 183 720 1377" preserveAspectRatio="xMidYMin slice" aria-hidden="true">${wallpaper}</svg>
        <ul class="messages">
          <li class="group reacted">
            <chat-bubble time="14:43">${thumb("lone", "#ffd93b", "#f5a623", "#c9801c", "t1")}</chat-bubble>
            <chat-bubble time="15:07" .reaction=${thumb("small", "#fbe3cf", "#f0c3a4", "#b98a6c", "t2")}>I will be there in 10 minutes</chat-bubble>
          </li>
          <li><chat-bubble out tail time="15:23">Arrived?</chat-bubble></li>
          <li class="group">
            <chat-bubble tail time="15:23">5 min</chat-bubble>
            <chat-bubble time="15:24">Traffic${rollingEyes}</chat-bubble>
            <chat-bubble time="15:29">Im here</chat-bubble>
            <chat-bubble time="15:29">Room num please</chat-bubble>
          </li>
          <li class="group pair">
            <chat-bubble class="room" out tail time="15:30">Room</chat-bubble>
            <chat-bubble class="floor" out time="15:30">Floor</chat-bubble>
            <span class="zany">${zany}</span>
          </li>
          <li><chat-bubble tail time="16:19">${kiss}${kiss}</chat-bubble></li>
          <li><chat-bubble out tail time="16:21">How all was?))</chat-bubble></li>
          <li class="unread"><span class="pill">1 непрочитанное сообщение</span></li>
          <li><chat-bubble tail long time="16:24" .reaction=${heart}>Laura is beautiful, dominant, and sexy. Thank you. Everyone here is special.</chat-bubble></li>
        </ul>

        <form class="composer" @submit=${(e: Event) => e.preventDefault()}>
          <div class="field">
            <button type="button" aria-label="Stickers">
              <svg width="40" height="40" viewBox="0 0 40 40"><path fill="none" stroke="currentColor" stroke-width="3.800" stroke-linejoin="round" d="M14 2h12c8 0 12 4 12 12v9c0 3-12 15-15 15h-9C6 38 2 34 2 26V14C2 6 6 2 14 2z" /><circle cx="13" cy="14" r="3" fill="currentColor" /><circle cx="27" cy="14" r="3" fill="currentColor" /><path fill="currentColor" d="M10 22.500h15c-2 3-3 3.500-3 6-5 0-10-2-12-6z" /><path fill="none" stroke="currentColor" stroke-width="3" d="M22.500 38V30c0-5 2-7.500 7-7.500h8" /></svg>
            </button>
            <input type="text" placeholder="Сообщение" aria-label="Сообщение" />
            <button type="button" aria-label="Attach">
              <svg width="26" height="40" viewBox="0 0 26 40" fill="none" stroke="currentColor" stroke-width="3.600" stroke-linecap="round"><path d="M24 10v17c0 15-22 15-22 0V11C2-1 18-1 18 11v15c0 6-8 6-8 0V11" /></svg>
            </button>
            <button type="button" aria-label="Camera">
              <svg width="41" height="37" viewBox="0 0 41 37" fill="none" stroke="currentColor" stroke-width="3.900" stroke-linejoin="round"><path d="M2 6.500h9.500L15 2h11l3.500 4.500H39V35H2z" /><circle cx="20.500" cy="20.500" r="7.500" /></svg>
            </button>
          </div>
          <button class="mic" type="button" aria-label="Voice message">
            <svg width="30" height="40" viewBox="0 0 30 40"><rect x="9" y="1" width="12" height="25" rx="6" fill="currentColor" /><path fill="none" stroke="currentColor" stroke-width="3.400" stroke-linecap="round" d="M3 20c1 15 23 15 24 0M15 32v6" /></svg>
          </button>
        </form>
      </main>

      <nav class="nav" aria-label="System">
        <button aria-label="Recent apps"><svg width="26" height="30" viewBox="0 0 26 30" stroke="currentColor" stroke-width="4"><path d="M0 3h26M0 15h26M0 27h26" /></svg></button>
        <button aria-label="Home"><svg width="30" height="30" viewBox="0 0 30 30" fill="none" stroke="currentColor" stroke-width="3.600"><circle cx="15" cy="15" r="12.500" /></svg></button>
        <button aria-label="Back"><svg width="26" height="30" viewBox="0 0 26 30" fill="none" stroke="currentColor" stroke-width="3.400" stroke-linejoin="round"><path d="M22.500 2v26L2.500 15z" /></svg></button>
      </nav>
    </div>`;
  }
}
